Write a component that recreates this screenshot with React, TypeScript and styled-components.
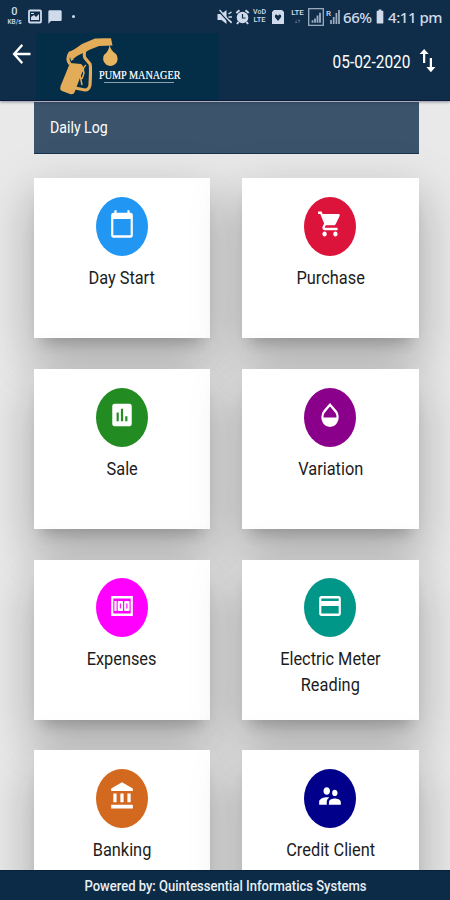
import React from "react";
import styled, { createGlobalStyle } from "styled-components";
import {
  MdAccountBalance,
  MdArrowBack,
  MdAssessment,
  MdBatteryFull,
  MdCalendarToday,
  MdChatBubble,
  MdImportExport,
  MdMoney,
  MdOpacity,
  MdPayment,
  MdSupervisorAccount,
} from "react-icons/md";

const GlobalStyle = createGlobalStyle`
  * { box-sizing: border-box; }
  body { margin: 0; font-family: Roboto, "Liberation Sans", sans-serif; }
`;

const Screen = styled.div`
  display: flex;
  flex-direction: column;
  width: 450px;
  height: 900px;
  overflow: hidden;
  background: #e9e9e9;
`;

const Header = styled.header`
  display: flex;
  flex-direction: column;
  flex: none;
  height: 101px;
  background: #0f2d49;
  border-bottom: 1px solid #0b1b40;
  box-shadow: 0 1px 3px rgba(20, 20, 60, 0.45);
  z-index: 1;
`;

const StatusBar = styled.div`
  display: flex;
  justify-content: space-between;
  height: 33px;
  padding: 0 8px 0 7px;
  color: #cfdbea;
`;

const StatusGroup = styled.div<{ $gap: number }>`
  display: flex;
  align-items: center;
  gap: ${(p) => p.$gap}px;
`;

const Stack = styled.div<{ $top: number; $bottom: number; $width: number }>`
  display: flex;
  flex-direction: column;
  align-items: center;
  width: ${(p) => p.$width}px;
  line-height: 1.15;
  font-weight: 500;
  white-space: nowrap;
  span:first-child { font-size: ${(p) => p.$top}px; }
  span:last-child { font-size: ${(p) => p.$bottom}px; }
`;

const StatusText = styled.span<{ $width: number }>`
  width: ${(p) => p.$width}px;
  font: 500 15px/20px "Noto Sans", sans-serif;
  letter-spacing: -0.45px;
  white-space: nowrap;
`;

const StatusIcon = styled.svg`
  display: block;
  flex: none;
`;

const HeartCard = styled(StatusIcon)`
  margin: 0 3px;
`;

const Battery = styled(MdBatteryFull)`
  width: 16px;
  height: 17px;
  margin: 0 -2px;
`;

const Dot = styled.span`
  width: 3px;
  height: 3px;
  margin-left: 3px;
  border-radius: 50%;
  background: currentColor;
`;

const Toolbar = styled.div`
  display: flex;
  flex: 1;
  color: #fff;
`;

const BackButton = styled.button`
  width: 36px;
  height: 42px;
  padding: 0 0 0 8px;
  border: 0;
  background: none;
  color: inherit;
  svg { display: block; width: 27px; height: 30px; }
`;

const Logo = styled.div`
  display: flex;
  width: 183px;
  height: 67px;
  padding-left: 22px;
  background: #042d48;
`;

const LogoText = styled.div`
  margin: 35px 0 0 -27.5px;
  width: 84px;
  color: #e8eef2;
  font: 12px/15px "Liberation Serif", serif;
  white-space: nowrap;
`;

const LogoName = styled.span`
  display: block;
  transform: scaleX(0.85);
  transform-origin: left;
  text-shadow: 0 0 0.5px #e8eef2;
`;

const LogoRule = styled.div`
  width: 70px;
  height: 1px;
  margin: -1px 0 0 5px;
  background: #8ba0ad;
`;

const DateBox = styled.div`
  display: flex;
  flex: 1;
  justify-content: flex-end;
  align-items: center;
  height: 57px;
  padding-right: 9px;
  font-size: 17.5px;
  svg { width: 27px; height: 31px; margin: -3px 0 0 4px; }
`;

const Squeeze = styled.span<{ $x: number; $origin?: string }>`
  display: inline-block;
  transform: scaleX(${(p) => p.$x});
  transform-origin: ${(p) => p.$origin ?? "center"};
  white-space: nowrap;
`;

const Content = styled.main`
  flex: 1;
  min-height: 0;
  overflow: hidden;
  padding: 1px 31.4px 0 33.7px;
`;

const Banner = styled.h1`
  margin: 0 0 24.4px;
  height: 52px;
  padding: 0 16.3px;
  border-bottom: 1.5px solid #17344f;
  background: #3c546b;
  color: #fff;
  font-size: 16px;
  font-weight: 400;
  line-height: 52px;
`;

const Grid = styled.div`
  display: grid;
  grid-template-columns: 176px 176.4px;
  grid-auto-rows: 160px;
  justify-content: space-between;
  row-gap: 30.7px;
`;

const Card = styled.section`
  display: flex;
  flex-direction: column;
  align-items: center;
  padding-top: 18.5px;
  background: #fff;
  box-shadow: 0 12px 14px -8px rgba(0, 0, 0, 0.2), 0 28px 42px 1px rgba(0, 0, 0, 0.14),
    0 14px 48px 6px rgba(0, 0, 0, 0.13);
`;

const Disc = styled.div<{ $color: string }>`
  display: flex;
  justify-content: center;
  width: 52px;
  height: 59px;
  padding-top: 12.5px;
  border-radius: 50%;
  background: ${(p) => p.$color};
  color: #fff;
  svg { width: 26px; height: 30px; }
`;

const Label = styled.div`
  margin-top: 9px;
  color: #1c1c1c;
  font-size: 19px;
  line-height: 26px;
  text-align: center;
`;

const Footer = styled.footer`
  flex: none;
  height: 30px;
  background: #0b2b46;
  border-top: 1px solid #08213a;
  color: #e9eff5;
  font-size: 15px;
  font-weight: 500;
  line-height: 31px;
  text-align: center;
  z-index: 1;
`;

type IconProps = { preserveAspectRatio?: string };

function CartIcon(props: IconProps) {
  return (
    <svg viewBox="0 0 24 24" fill="currentColor" {...props}>
      <path d="M7 18c-1.1 0-2 .9-2 2s.9 2 2 2 2-.9 2-2-.9-2-2-2zM1 2v2h2l3.6 7.6-1.4 2.4c-.1.3-.2.6-.2 1 0 1.1.9 2 2 2h12v-2H7.4c-.1 0-.2-.1-.2-.3V14.6l.9-1.6h7.5c.7 0 1.4-.4 1.7-1l3.6-6.5c.1-.2.1-.3.1-.5 0-.6-.4-1-1-1H5.2L4.3 2H1zm16 16c-1.1 0-2 .9-2 2s.9 2 2 2 2-.9 2-2-.9-2-2-2z" />
    </svg>
  );
}

const tiles = [
  { lines: ["Day Start"], color: "#2196f3", Icon: MdCalendarToday },
  { lines: ["Purchase"], color: "#dc143c", Icon: CartIcon },
  { lines: ["Sale"], color: "#228b22", Icon: MdAssessment },
  { lines: ["Variation"], color: "#8b008b", Icon: MdOpacity },
  { lines: ["Expenses"], color: "#ff00ff", Icon: MdMoney },
  { lines: ["Electric Meter", "Reading"], color: "#009688", Icon: MdPayment },
  { lines: ["Banking"], color: "#d2691e", Icon: MdAccountBalance },
  { lines: ["Credit Client"], color: "#00008b", Icon: MdSupervisorAccount },
];

function FuelNozzle() {
  return (
    <StatusIcon width="68" height="64" viewBox="0 0 68 64" fill="none">
      <path d="M12 30L23 31Q26 33 25 37L17 58Q16 62 12 61L4 58Q1 57 3 52Z" fill="#e3ac58" />
      <path
        d="M12 31Q8 26 12 20L28 14Q25 21 27 25L32 31Q33 33 32 52Q31 57 27 57L17 55"
        stroke="#e3ac58" strokeWidth="3.2" strokeLinejoin="round"
      />
      <path d="M11 20L24 11L37 5.5Q39 5 53 5.2L54.5 12.5L41 13L31 17L23 22L13 28Z" fill="#e3ac58" />
      <path d="M22 33L25 36L22 42L24 52M28 32Q24 35 26 40L24 46" stroke="#e3ac58" strokeWidth="1.5" />
      <path d="M15 26L19 23L25 20L22 28Z" fill="#042d48" />
      <path d="M51.5 12Q53 18 58 21A7.3 7.3 0 1 1 46 22Q51 18 51.5 12Z" fill="#e8b45f" />
    </StatusIcon>
  );
}

function PictureIcon() {
  return (
    <StatusIcon width="14" height="15" viewBox="0 0 14 15">
      <rect x="1" y="1.5" width="12" height="12" rx="1" fill="none" stroke="currentColor" strokeWidth="1.8" />
      <path d="M3 11V8L6 6L8 8L11 5V11ZM3 4H6V5H3Z" fill="currentColor" />
    </StatusIcon>
  );
}

function MutedIcon() {
  return (
    <StatusIcon width="16" height="16" viewBox="0 0 15 16">
      <path d="M0 5H4L9 1V15L4 11H0Z" fill="currentColor" />
      <path d="M11 5L14 3M11 8H14.5M11 11L14 13" stroke="currentColor" strokeWidth="1.5" />
      <path d="M1 2L13 15" stroke="#0f2d49" strokeWidth="1.2" />
      <path d="M2 1L14 14" stroke="currentColor" strokeWidth="1.3" />
    </StatusIcon>
  );
}

function AlarmIcon() {
  return (
    <StatusIcon width="15" height="16" viewBox="0 0 14 16">
      <circle cx="7" cy="8.5" r="5.8" fill="currentColor" />
      <path d="M.8 4L4 1.3M13.2 4L10 1.3M3 13L1.5 15M11 13L12.5 15" stroke="currentColor" strokeWidth="2" />
      <path d="M7 5V9H10" fill="none" stroke="#0f2d49" strokeWidth="1.2" />
    </StatusIcon>
  );
}

function HeartCardIcon() {
  return (
    <HeartCard width="12" height="16" viewBox="0 0 12 16">
      <path d="M2 1H10L12 3V15H0V3Z" fill="currentColor" />
      <path d="M6 12L2.8 8Q2.6 5.4 4.6 5.6L6 6.8L7.4 5.6Q9.4 5.4 9.2 8Z" fill="#0f2d49" />
    </HeartCard>
  );
}

function BoxedSignalIcon() {
  return (
    <StatusIcon width="16" height="18" viewBox="0 0 16 19" preserveAspectRatio="none" opacity=".75">
      <rect x=".7" y=".7" width="14.6" height="17.6" fill="none" stroke="currentColor" strokeWidth="1.3" />
      <path d="M4.5 13V15.5M7 11V15.5M9.5 8V15.5M12 5V15.5" stroke="currentColor" strokeWidth="1.8" />
    </StatusIcon>
  );
}

const Roaming = styled.div`
  display: flex;
  width: 15px;
  font-size: 8px;
  line-height: 9px;
  font-weight: 500;
  svg { margin-left: -1px; }
`;

function SignalBars() {
  return (
    <StatusIcon width="10" height="15" viewBox="0 0 10 15" opacity=".75">
      <path d="M1 11V15M3.7 8V15M6.4 4V15M9 1V15" stroke="currentColor" strokeWidth="1.7" />
    </StatusIcon>
  );
}

export default function App() {
  return (
    <Screen>
      <GlobalStyle />
      <Header>
        <StatusBar>
          <StatusGroup $gap={5.5}>
            <Stack $top={11} $bottom={6.5} $width={15}><span>0</span><span>KB/s</span></Stack>
            <PictureIcon />
            <MdChatBubble size={16} />
            <Dot />
          </StatusGroup>
          <StatusGroup $gap={2}>
            <MutedIcon />
            <AlarmIcon />
            <Stack $top={7} $bottom={7.5} $width={15}><span>VoD</span><span>LTE</span></Stack>
            <HeartCardIcon />
            <Stack $top={8} $bottom={6} $width={17}><span>LTE</span><span>↓↑</span></Stack>
            <BoxedSignalIcon />
            <Roaming><span>R</span><SignalBars /></Roaming>
            <StatusText $width={29}>66%</StatusText>
            <Battery preserveAspectRatio="none" />
            <StatusText $width={54}>4:11 pm</StatusText>
          </StatusGroup>
        </StatusBar>
        <Toolbar>
          <BackButton aria-label="Back"><MdArrowBack preserveAspectRatio="none" /></BackButton>
          <Logo>
            <FuelNozzle />
            <LogoText>
              <LogoName>PUMP MANAGER</LogoName>
              <LogoRule />
            </LogoText>
          </Logo>
          <DateBox>
            <Squeeze $x={0.88} $origin="right">05-02-2020</Squeeze>
            <MdImportExport preserveAspectRatio="none" />
          </DateBox>
        </Toolbar>
      </Header>
      <Content>
        <Banner><Squeeze $x={0.885} $origin="left">Daily Log</Squeeze></Banner>
        <Grid>
          {tiles.map(({ lines, color, Icon }) => (
            <Card key={lines[0]}>
              <Disc $color={color}><Icon preserveAspectRatio="none" /></Disc>
              <Label>
                {lines.map((line) => (
                  <div key={line}><Squeeze $x={0.86}>{line}</Squeeze></div>
                ))}
              </Label>
            </Card>
          ))}
        </Grid>
      </Content>
      <Footer><Squeeze $x={0.868}>Powered by: Quintessential Informatics Systems</Squeeze></Footer>
    </Screen>
  );
}
